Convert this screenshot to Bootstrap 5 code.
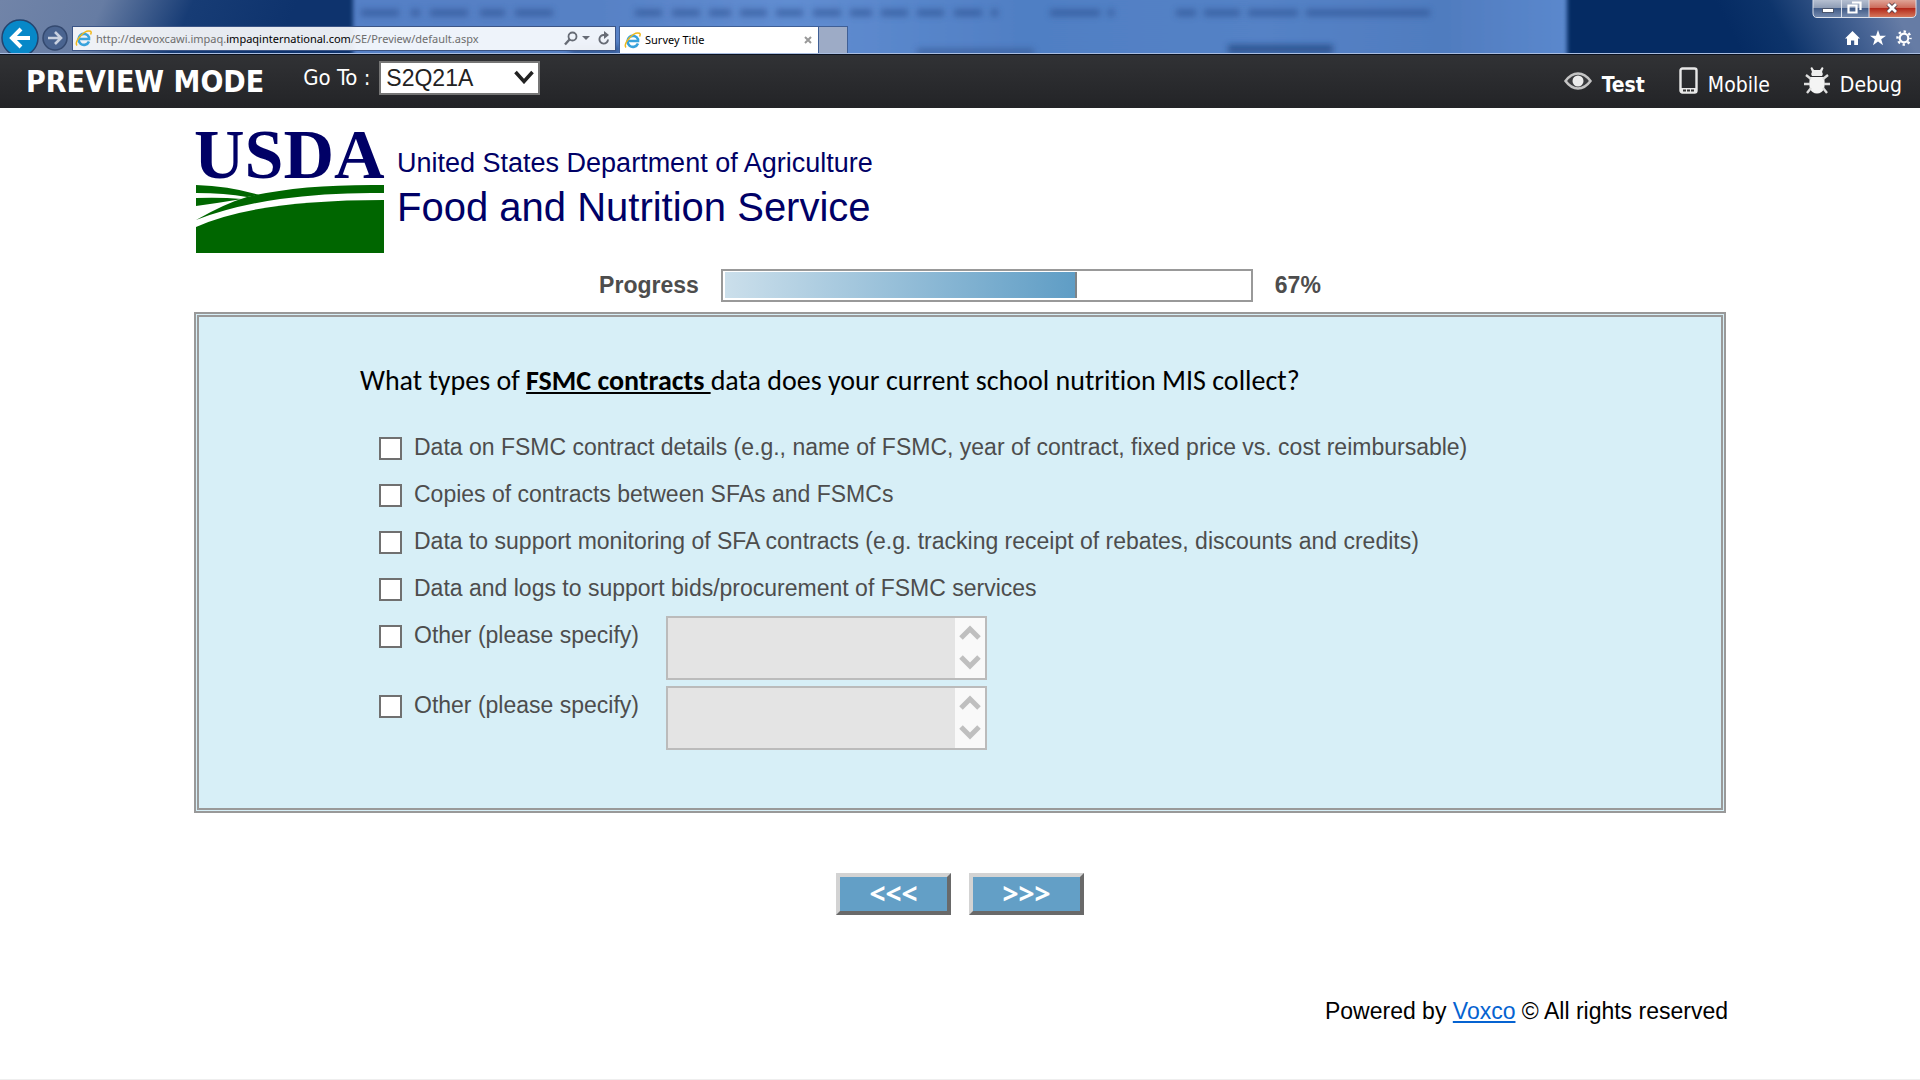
<!DOCTYPE html>
<html lang="en">
<head>
<meta charset="utf-8">
<meta name="viewport" content="width=device-width, initial-scale=1">
<title>Survey Title</title>
<link href="https://cdn.jsdelivr.net/npm/bootstrap@5.3.0/dist/css/bootstrap.min.css" rel="stylesheet">
<style>
body { font-family: "Liberation Sans", Arial, sans-serif; font-size: 23px; line-height: 28px; color: #000; background: #fff; min-height: 100vh; border-bottom: 1px solid #eee; }
svg { display: block; flex: none; }

/* browser frame */
.frame-bar { height: 54px; overflow: hidden; background: #052c64; border-bottom: 1px solid #a9bde0; font-family: "Noto Sans", "Segoe UI", sans-serif; font-size: 11px; line-height: 16px; }
.frame-glass { position: absolute; inset: 0; width: 100%; height: 100%; }
.frame-row { padding-top: 26px; height: 53px; }
.icon-btn { border: 0; background: none; padding: 0; }
.nav-back { margin: -7px 0 0 1px; }
.nav-fwd { margin: -1px 4px 0 3px; }
.address-box { width: 544px; height: 25px; background: rgba(255,255,255,.9); border: 1px solid #3c5586; padding: 0 5px 0 2px; }
.address-text { color: #6d6d6d; }
.address-text b { color: #000; font-weight: 400; }
.tab-active { width: 200px; height: 27px; background: #fff; border: 1px solid #3f5f96; border-bottom: 0; margin-left: 3px; padding: 0 6px 0 4px; color: #000; }
.tab-new { width: 29px; height: 27px; background: #9dabc6; border: 1px solid #3f5f96; border-left: 0; border-bottom: 0; }
.frame-tools { padding: 4px 8px 0 0; gap: 10px; }
.window-btns { position: absolute; top: 0; right: 3px; }

/* preview toolbar */
.preview-bar { height: 54px; background: linear-gradient(#313235, #232427); border-top: 1px solid #0b1220; color: #fff; font-family: "DejaVu Sans Condensed", "DejaVu Sans", Tahoma, sans-serif; font-stretch: condensed; font-size: 22px; padding: 0 18px 0 26px; }
.preview-title { font-size: 30px; line-height: 36px; font-weight: 700; margin: 0 39px 0 0; }
.goto-select { width: 161px; height: 34px; margin: 0 0 8px 9px; padding: 0 5px; border: 2px solid #767676; background: #fff; color: #222; font: 23px/28px "Liberation Sans", Arial, sans-serif; appearance: none; }
.goto-wrap svg { position: absolute; right: 6px; top: 9px; pointer-events: none; }
.mode-links { gap: 34px; font-size: 21px; }
.mode-link { color: #fff; text-decoration: none; gap: 10px; padding-top: 6px; }

/* survey */
.survey { width: 80%; margin: 0 auto; padding: 0 2px; }
.progress-row { height: 33px; margin: 14px 0 10px; color: #4d4d4d; font-weight: 700; gap: 22px; }
.progress-row span { padding-bottom: 2px; }
.meter { width: 532px; height: 33px; border: 2px solid #999; padding: 1px 0 2px 2px; }
.meter-fill { height: 26px; background: linear-gradient(90deg, #cbdfeb, #5f9dc5); border-right: 2px solid #7f8487; }
.question-panel { background: #d7eff7; border: 5px double #999; padding: 46px 24px 58px 161px; }
.question-text { font-family: Carlito, Calibri, "Open Sans", sans-serif; font-size: 28px; font-variant-ligatures: none; line-height: 36px; margin: 0 0 23px; }
.answer-row { padding-left: 19px; height: 47px; }
.answer-row.is-open { height: 70px; }
.answer-row input { appearance: none; flex: none; width: 23px; height: 23px; margin: 15px 12px 0 0; border: 2px solid #707070; background: #fff; }
.answer-row label { color: #4d4d4d; margin-top: 11px; }
.open-box { width: 321px; height: 64px; margin: 6px 0 0 27px; border: 2px solid #bbb; background: #f9f9f9; }
.open-box textarea { flex: 1; min-width: 0; resize: none; border: 0; background: #e4e4e4; overflow: hidden; }
.nav-btns { gap: 18px; margin-top: 60px; }
.step-btn { width: 115px; height: 42px; padding: 0 0 2px; background: #639fc6; color: #fff; border: 4px solid; border-color: #d3d3d3 #696969 #696969 #d3d3d3; font: 700 28px/32px "Noto Sans", sans-serif; }
.credit { margin: 82px -2px 0; text-align: right; padding-bottom: 40px; }
.credit a { color: #0563d1; }
</style>
</head>
<body>

<header class="frame-bar position-relative">
  <svg class="frame-glass" viewBox="0 0 1920 54" preserveAspectRatio="none" aria-hidden="true">
    <defs>
      <linearGradient id="gl" gradientUnits="userSpaceOnUse" x1="0" y1="0" x2="250" y2="110"><stop offset="0" stop-color="#7184a8"/><stop offset=".35" stop-color="#667ca3"/><stop offset=".65" stop-color="#173c75"/><stop offset="1" stop-color="#0e336d"/></linearGradient>
      <linearGradient id="gm"><stop offset="0" stop-color="#5580c6"/><stop offset=".2" stop-color="#5781c5"/><stop offset=".36" stop-color="#618dd1"/><stop offset=".55" stop-color="#507fc4"/><stop offset=".75" stop-color="#5482c6"/><stop offset=".9" stop-color="#507cbf"/><stop offset="1" stop-color="#5b88cd"/></linearGradient>
      <linearGradient id="gr" gradientUnits="userSpaceOnUse" x1="1740" y1="50" x2="1880" y2="-20"><stop offset="0" stop-color="#052b63"/><stop offset=".3" stop-color="#0d346b"/><stop offset=".8" stop-color="#4b6797"/><stop offset="1" stop-color="#667ca5"/></linearGradient>
      <filter id="soft" x="-5%" y="-60%" width="110%" height="220%"><feGaussianBlur stdDeviation="3"/></filter>
      <filter id="edge" x="-2%" width="104%"><feGaussianBlur stdDeviation="2 0"/></filter>
    </defs>
    <rect width="360" height="54" fill="url(#gl)"/>
    <rect x="1560" width="360" height="54" fill="url(#gr)"/>
    <rect x="353" y="-10" width="1214" height="74" fill="url(#gm)" filter="url(#edge)"/>
    <g filter="url(#soft)" stroke="#2c508f" stroke-width="7" opacity=".6" fill="none">
      <path d="M361 13H556" stroke-dasharray="38 12 9 10 38 12 25 10"/>
      <path d="M635 13H998" stroke-dasharray="27 10 28 9 22 9 27 9"/>
      <path d="M1050 13h50m8 0h6M1176 13h20m8 0h36m8 0h50m8 0h124"/>
      <path d="M570 51h50M1228 50h105" stroke="#123770" stroke-width="9"/>
      <path d="M917 53h117" stroke="#34548f"/>
    </g>
  </svg>
  <div class="frame-row position-relative d-flex align-items-start">
    <button class="icon-btn nav-back" type="button" aria-label="Back">
      <svg width="38" height="38" viewBox="0 0 38 38"><circle cx="19" cy="19" r="18" fill="#0788c8" stroke="#24446f" stroke-width="1.5"/><path d="M29 19H12M20 10l-9 9 9 9" fill="none" stroke="#fff" stroke-width="4"/></svg>
    </button>
    <button class="icon-btn nav-fwd" type="button" aria-label="Forward">
      <svg width="26" height="26" viewBox="0 0 26 26"><circle cx="13" cy="13" r="12" fill="#4a6490" stroke="#34496f" stroke-width="1.5"/><path d="M6 13h12M13 7l6 6-6 6" fill="none" stroke="#c9d1e0" stroke-width="2.6"/></svg>
    </button>
    <div class="address-box d-flex align-items-center">
      <svg width="17" height="17" viewBox="0 0 17 17"><path d="M14 11.500A5.500 5.500 0 1 1 14 7.200V9H4.500" fill="none" stroke="#38a3dc" stroke-width="2.600"/><path d="M2 15.500C-1 12 9-1 15.500 1.200c1 .8.500 2.500 0 3.300" fill="none" stroke="#f0b91c" stroke-width="1.500"/></svg>
      <span class="address-text text-nowrap ms-1 flex-grow-1">http://devvoxcawi.impaq.<b>impaqinternational.com</b>/SE/Preview/default.aspx</span>
      <button class="icon-btn" type="button" aria-label="Search"><svg width="14" height="15" viewBox="0 0 14 15"><circle cx="8.500" cy="5.500" r="4" fill="none" stroke="#666b75" stroke-width="1.800"/><path d="M5.500 8.500L1 13.500" stroke="#666b75" stroke-width="2.400"/></svg></button>
      <svg class="ms-1" width="8" height="5" viewBox="0 0 8 5"><path d="M0 0h8L4 4z" fill="#666b75"/></svg>
      <button class="icon-btn ms-2" type="button" aria-label="Refresh"><svg width="12" height="15" viewBox="0 0 12 15"><path d="M10 8.500A4.300 4.300 0 1 1 6 4h2" fill="none" stroke="#666b75" stroke-width="1.900"/><path d="M6 0l5 4-5 4z" fill="#666b75"/></svg></button>
    </div>
    <div class="tab-active d-flex align-items-center">
      <svg width="17" height="17" viewBox="0 0 17 17"><path d="M14 11.500A5.500 5.500 0 1 1 14 7.200V9H4.500" fill="none" stroke="#38a3dc" stroke-width="2.600"/><path d="M2 15.500C-1 12 9-1 15.500 1.200c1 .8.500 2.500 0 3.300" fill="none" stroke="#f0b91c" stroke-width="1.500"/></svg>
      <span class="ms-1 flex-grow-1">Survey Title</span>
      <button class="icon-btn" type="button" aria-label="Close tab"><svg width="8" height="8" viewBox="0 0 8 8"><path d="M1 1l6 6M7 1L1 7" stroke="#999" stroke-width="2"/></svg></button>
    </div>
    <div class="tab-new"></div>
    <div class="frame-tools d-flex ms-auto">
      <button class="icon-btn" type="button" aria-label="Home"><svg width="15" height="16" viewBox="0 0 15 16"><path d="M7.500 1L15 8.500h-2V15H9.200v-4.500H6V15H2V8.500H0z" fill="#fff"/></svg></button>
      <button class="icon-btn" type="button" aria-label="Favorites"><svg width="16" height="16" viewBox="0 0 16 16"><path d="M8 0l2 5.700h6l-4.800 3.600L13 15.200 8 11.600 3 15.200l1.800-5.900L0 5.700h6z" fill="#fff"/></svg></button>
      <button class="icon-btn" type="button" aria-label="Tools"><svg width="16" height="16" viewBox="0 0 16 16" fill="none" stroke="#fff"><circle cx="8" cy="8" r="4.300" stroke-width="2.200"/><circle cx="8" cy="8" r="6.500" stroke-width="2.400" stroke-dasharray="2.400 2.705" stroke-dashoffset="1.200"/></svg></button>
    </div>
  </div>
  <svg class="window-btns" width="105" height="19" viewBox="0 0 105 19" role="img" aria-label="Minimize, restore, close">
    <defs>
      <linearGradient id="wb" x2="0" y2="1"><stop offset="0" stop-color="#b6c0d1"/><stop offset=".45" stop-color="#8f9db6"/><stop offset=".5" stop-color="#425c88"/><stop offset="1" stop-color="#7389ad"/></linearGradient>
      <linearGradient id="wc" x2="0" y2="1"><stop offset="0" stop-color="#dfa497"/><stop offset=".45" stop-color="#cd6c5c"/><stop offset=".5" stop-color="#b3291b"/><stop offset="1" stop-color="#d5765a"/></linearGradient>
    </defs>
    <path d="M1 0h56v17H5q-4 0-4-4z" fill="url(#wb)"/><path d="M57 0h47v13q0 4-4 4H57z" fill="url(#wc)"/>
    <path d="M1 0v13q0 4.500 4 4.500h95q4 0 4-4.500V0M29.500 0v17M57 0v17" fill="none" stroke="#dbe1ec"/>
    <rect x="10.500" y="8.500" width="11" height="4" fill="#fff" stroke="#4b566d"/>
    <path d="M40 2.500h8.500V10M36.500 5.500h8v7h-8z" fill="none" stroke="#fff" stroke-width="2.200"/>
    <path d="M76 4l8 8M84 4l-8 8" stroke="#4e3a45" stroke-width="4.500"/><path d="M76 4l8 8M84 4l-8 8" stroke="#fff" stroke-width="2.800"/>
  </svg>
</header>

<nav class="preview-bar d-flex align-items-center">
  <h1 class="preview-title text-nowrap">PREVIEW MODE</h1>
  <label for="goto" class="text-nowrap mb-2">Go To :</label>
  <div class="goto-wrap position-relative">
    <select id="goto" class="goto-select rounded-0 d-block"><option>S2Q21A</option></select>
    <svg width="20" height="14" viewBox="0 0 20 14"><path d="M1.500 2l8.500 9.500L18.500 2" fill="none" stroke="#222" stroke-width="3.500"/></svg>
  </div>
  <div class="mode-links d-flex ms-auto align-items-center">
    <a class="mode-link d-flex align-items-center fw-bold" href="#">
      <svg class="mb-2" width="28" height="18" viewBox="0 0 28 18"><path d="M1.500 9Q7 1.500 14 1.500T26.500 9Q21 16.500 14 16.500T1.500 9z" fill="#3a3b3e" stroke="#c4c4c4" stroke-width="2.500"/><circle cx="14" cy="9" r="5.500" fill="#ececec"/></svg>Test</a>
    <a class="mode-link d-flex align-items-center" href="#">
      <svg class="mb-2" width="19" height="27" viewBox="0 0 19 27"><rect x="1.500" y="1.500" width="16" height="24" rx="2" fill="none" stroke="#e8e8e8" stroke-width="2.400"/><path d="M2 21h15v5H2z" fill="#e8e8e8"/><path d="M4 23.500h3M8 23.500h3M12 23.500h3" stroke="#333" stroke-width="2"/></svg>Mobile</a>
    <a class="mode-link d-flex align-items-center" href="#">
      <svg class="mb-2" width="26" height="27" viewBox="0 0 26 27"><path d="M8 0l2 3h6l2-3 1.500 1-1.500 4c1 1 1 3 0 4H8c-1-1-1-3 0-4L6.500 1z" fill="#eee"/><path d="M6 10h14Q23 26 13 26.500 3 26 6 10z" fill="#f4f4f4"/><path d="M7 12L2 8M6 17H0M7 21l-4 5M19 12l5-4M20 17h6M19 21l4 5" stroke="#ddd" stroke-width="2.400"/></svg>Debug</a>
  </div>
</nav>

<main class="survey">
  <svg width="700" height="147" viewBox="194 108 700 147" role="img" aria-label="USDA Food and Nutrition Service">
    <g fill="#000066">
      <text x="194" y="178" font-family="Liberation Serif, serif" font-size="70" font-weight="700">USDA</text>
      <text x="397" y="172" font-family="Liberation Sans, sans-serif" font-size="27">United States Department of Agriculture</text>
      <text x="397" y="221" font-family="Liberation Sans, sans-serif" font-size="40">Food and Nutrition Service</text>
    </g>
    <g fill="#006600">
      <path d="M196 185Q230 186 259 195L247 197Q225 193 196 193z"/>
      <path d="M196 198Q220 197 242 199Q218 203 196 206z"/>
      <path d="M196 220Q226 203 247 197Q300 184 384 185V193Q330 192 280 199Q232 206 196 220z"/>
      <path d="M196 227Q255 200 384 200V253H196z"/>
    </g>
  </svg>

  <div class="progress-row d-flex justify-content-center align-items-center">
    <span>Progress</span>
    <div class="meter" role="progressbar" aria-label="Progress" aria-valuenow="67" aria-valuemin="0" aria-valuemax="100"><div class="meter-fill" style="width:67%"></div></div>
    <span>67%</span>
  </div>

  <form>
    <section class="question-panel">
      <p class="question-text">What types of <b><u>FSMC contracts </u></b>data does your current school nutrition MIS collect?</p>
      <div class="answer-row d-flex align-items-start"><input type="checkbox" id="a1"><label for="a1">Data on FSMC contract details (e.g., name of FSMC, year of contract, fixed price vs. cost reimbursable)</label></div>
      <div class="answer-row d-flex align-items-start"><input type="checkbox" id="a2"><label for="a2">Copies of contracts between SFAs and FSMCs</label></div>
      <div class="answer-row d-flex align-items-start"><input type="checkbox" id="a3"><label for="a3">Data to support monitoring of SFA contracts (e.g. tracking receipt of rebates, discounts and credits)</label></div>
      <div class="answer-row d-flex align-items-start"><input type="checkbox" id="a4"><label for="a4">Data and logs to support bids/procurement of FSMC services</label></div>
      <div class="answer-row is-open d-flex align-items-start"><input type="checkbox" id="a5"><label for="a5">Other (please specify)</label>
        <div class="open-box d-flex"><textarea aria-label="Other, first answer" disabled></textarea>
          <svg width="30" height="60" viewBox="0 0 30 60" fill="none" stroke="#bfbfbf" stroke-width="5"><path d="M6 20l9-9 9 9M6 39l9 9 9-9"/></svg></div></div>
      <div class="answer-row is-open d-flex align-items-start"><input type="checkbox" id="a6"><label for="a6">Other (please specify)</label>
        <div class="open-box d-flex"><textarea aria-label="Other, second answer" disabled></textarea>
          <svg width="30" height="60" viewBox="0 0 30 60" fill="none" stroke="#bfbfbf" stroke-width="5"><path d="M6 20l9-9 9 9M6 39l9 9 9-9"/></svg></div></div>
    </section>
    <div class="nav-btns d-flex justify-content-center">
      <button class="step-btn" type="button">&lt;&lt;&lt;</button>
      <button class="step-btn" type="button">&gt;&gt;&gt;</button>
    </div>
  </form>
  <footer class="credit">Powered by <a href="#">Voxco</a> © All rights reserved</footer>
</main>

<script src="https://cdn.jsdelivr.net/npm/bootstrap@5.3.0/dist/js/bootstrap.bundle.min.js"></script>
</body>
</html>
